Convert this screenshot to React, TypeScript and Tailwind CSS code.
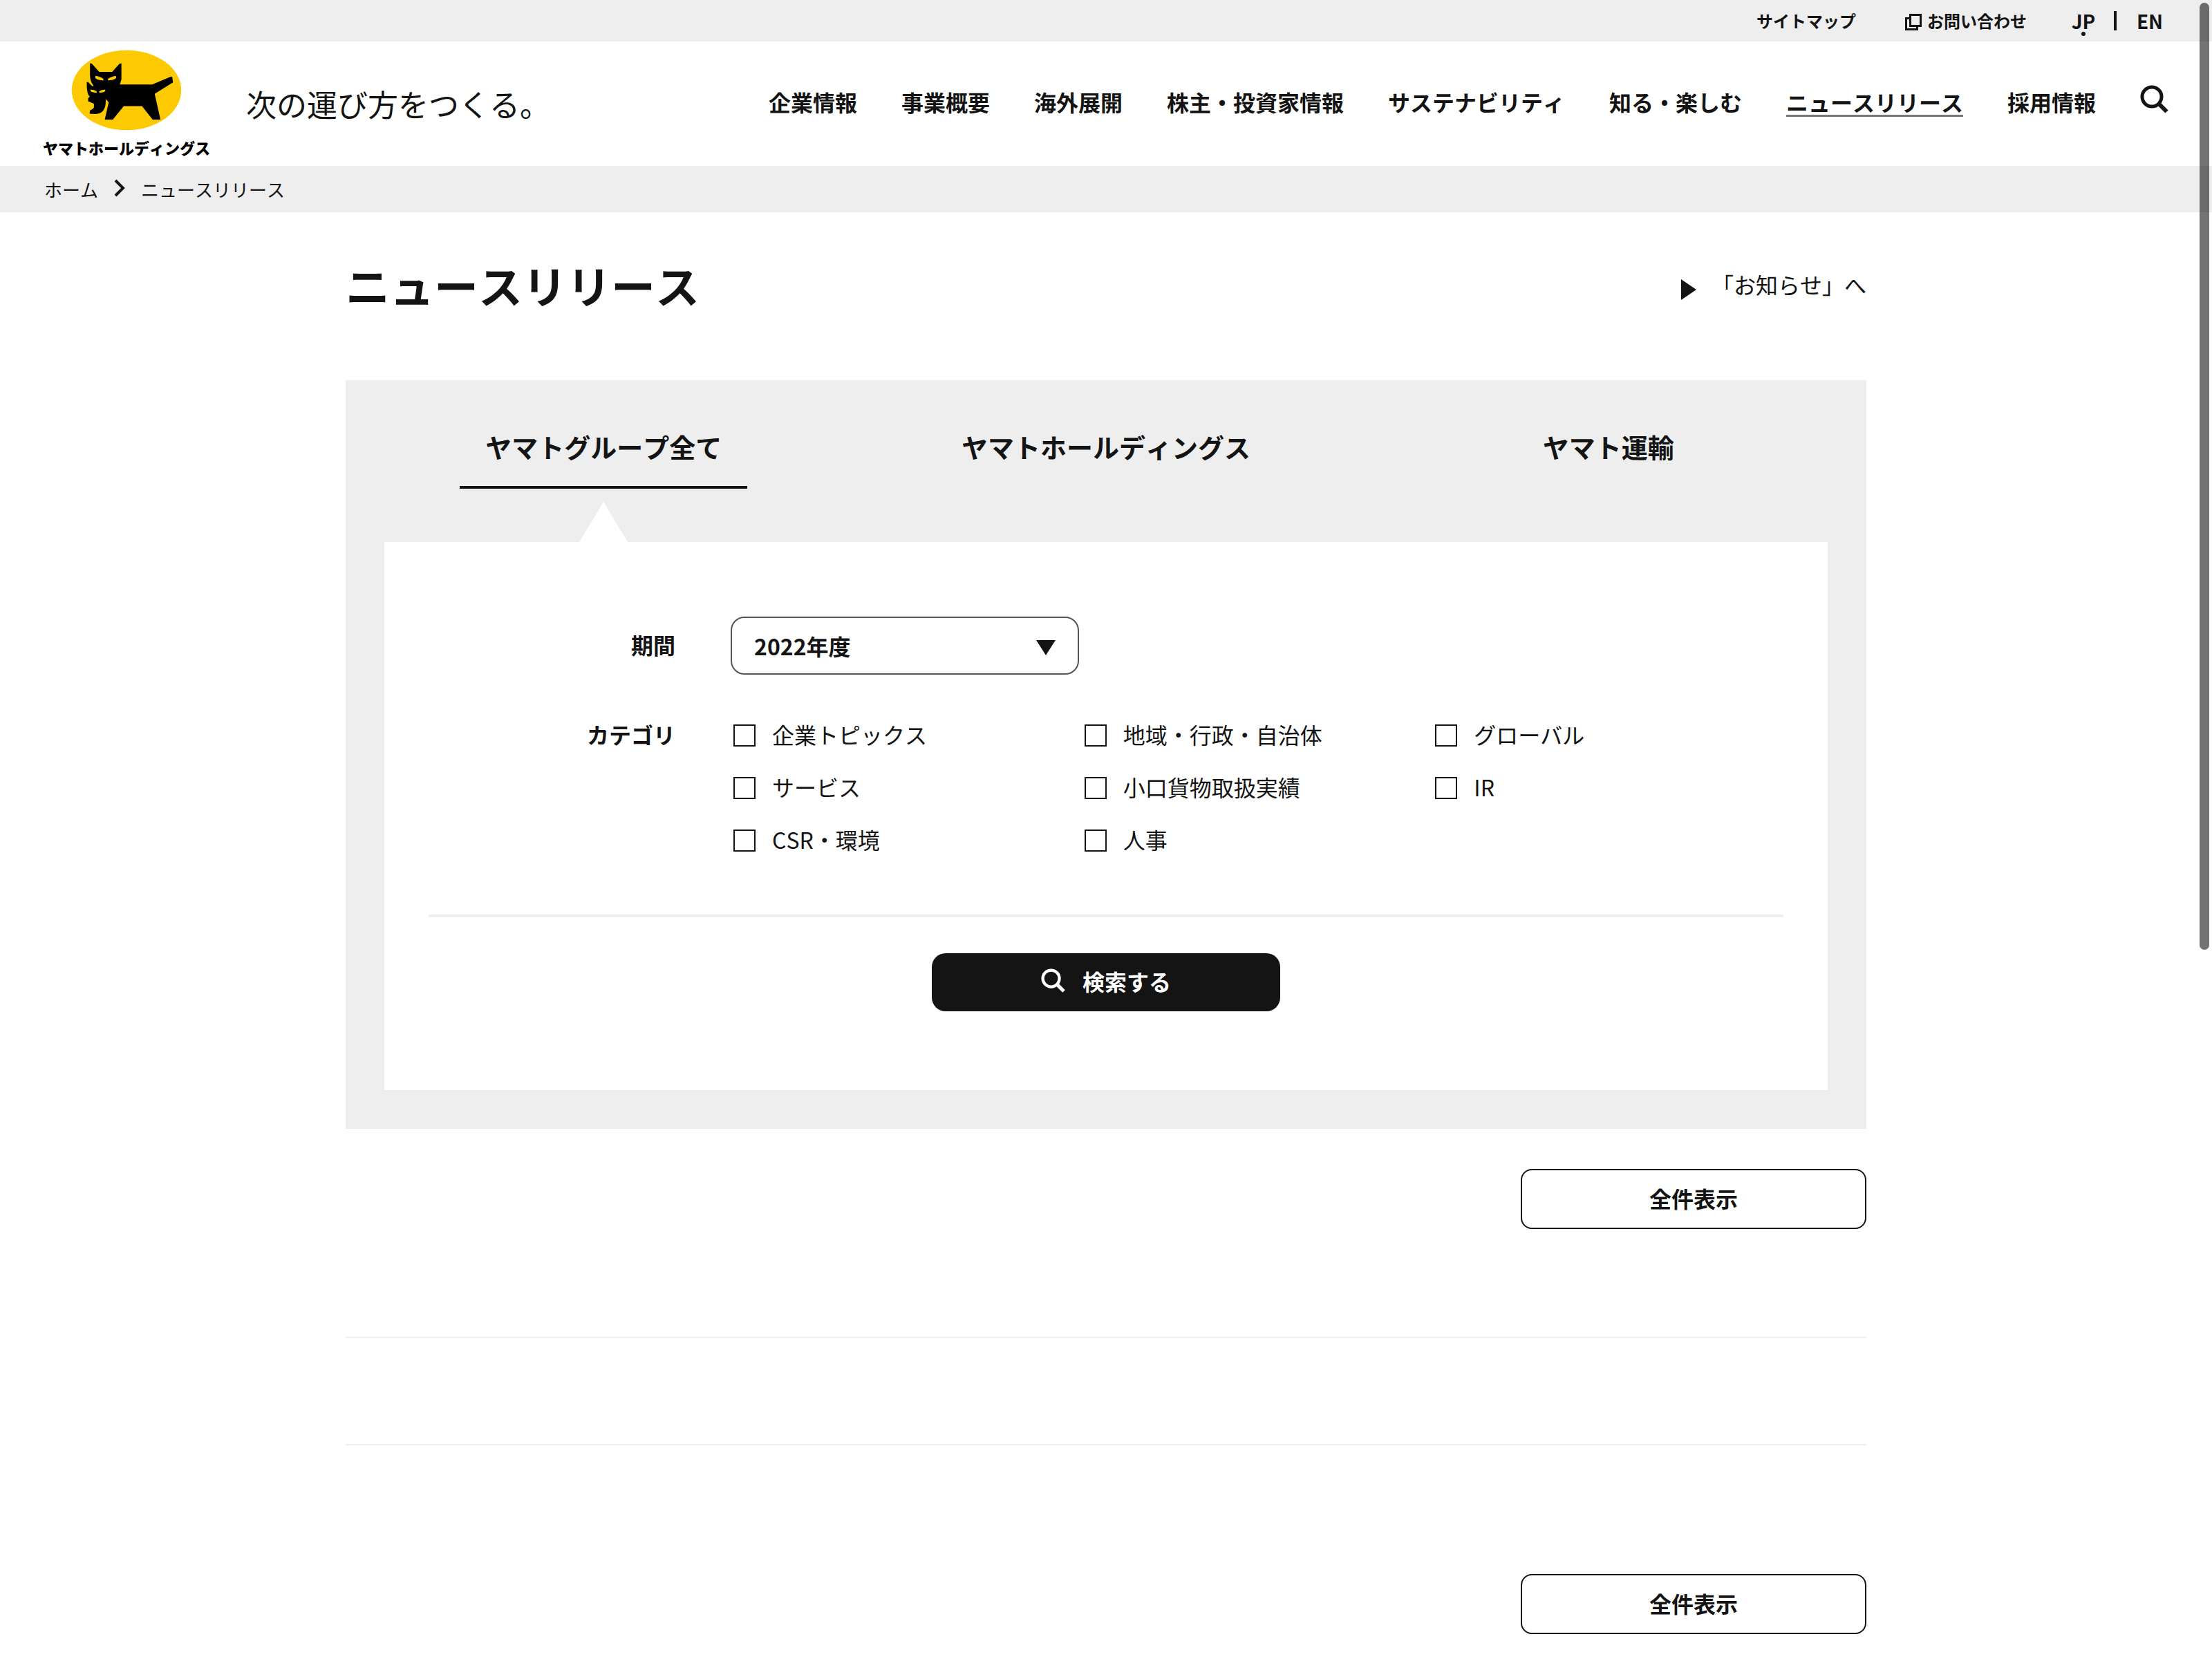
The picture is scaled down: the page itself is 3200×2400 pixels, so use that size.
import { useState } from 'react';

const navItems = [
  '企業情報',
  '事業概要',
  '海外展開',
  '株主・投資家情報',
  'サステナビリティ',
  '知る・楽しむ',
  'ニュースリリース',
  '採用情報',
];

const tabs = ['ヤマトグループ全て', 'ヤマトホールディングス', 'ヤマト運輸'];

const categories = [
  '企業トピックス',
  '地域・行政・自治体',
  'グローバル',
  'サービス',
  '小口貨物取扱実績',
  'IR',
  'CSR・環境',
  '人事',
];

const SearchIcon = ({ className }: { className: string }) => (
  <svg viewBox="0 0 42 42" fill="none" stroke="currentColor" className={className} aria-hidden="true">
    <circle cx="17" cy="17" r="14" strokeWidth="5" />
    <path d="M27 27 L38.5 38.5" strokeWidth="6" />
  </svg>
);

const Logo = () => (
  <a href="/" className="flex flex-col items-center">
    <svg viewBox="160 37 478 350" className="h-[117px] w-[160px]" aria-hidden="true">
      <ellipse cx="399" cy="212" rx="237" ry="173" fill="#fdc900" />
      <path
        d="M241 95 L249 97 L281 133 L337 133 L369 97 L377 96 L377 166 L370 187 L510 187 L592 153 L597 155 L600 178 L521 228 L546 339 L512 339 L466 281 L387 281 L340 339 L305 339 L322 264 L309 250 C312 290 297 315 264 315 L240 314 L240 300 C248 297 255 292 258 287 L258 270 L233 260 L233 247 L240 240 C229 228 227 210 227 177 L233 177 L250 194 L257 194 C246 180 241 163 241 147 Z"
        fill="#000"
      />
      <path d="M264 151 C278 151 290 156 299 163 L299 170 C284 170 270 166 264 160 Z" fill="#fdc900" />
      <path d="M354 151 C341 151 328 156 319 163 L319 170 C334 170 348 166 354 160 Z" fill="#fdc900" />
      <path d="M243 210 C254 208 263 212 270 217 L270 223 C258 223 247 220 243 216 Z" fill="#fdc900" />
      <path d="M307 210 C297 208 288 212 281 217 L281 223 C292 223 303 220 307 216 Z" fill="#fdc900" />
    </svg>
    <span className="mt-2 text-[22px] leading-8 font-black text-black">ヤマトホールディングス</span>
  </a>
);

const ShowAllButton = () => (
  <div className="flex justify-end">
    <button type="button" className="h-[87px] w-[500px] rounded-2xl border-2 border-[#141414] bg-white pb-1 text-[32px] leading-12 font-bold">
      全件表示
    </button>
  </div>
);

const App = () => {
  const [activeTab, setActiveTab] = useState(0);
  const [year, setYear] = useState('2022');

  return (
    <div lang="ja" className="relative bg-white pb-9 font-['Noto_Sans_CJK_JP',sans-serif] text-[#141414] [font-kerning:none]">
      <div className="flex h-[60px] items-center justify-end bg-[#eee] pr-[68px] text-2xl font-bold">
        <a href="/sitemap" className="mr-[71px]">サイトマップ</a>
        <a href="/contact" className="mr-16 flex items-center gap-2">
          <svg viewBox="0 0 24 24" fill="none" stroke="currentColor" strokeWidth="3" className="mt-1 size-6" aria-hidden="true">
            <path d="M7.5 1.5 H22.5 V17.5 H7.5 Z" />
            <path d="M7 6.5 H1.5 V22.5 H17.5 V18" />
          </svg>
          お問い合わせ
        </a>
        <div className="flex items-center gap-[26px] text-center text-[28px] leading-10">
          <a href="/" className="relative w-9">
            JP
            <span className="absolute -bottom-0.5 left-1/2 size-[6px] -translate-x-1/2 rounded-full bg-[#141414]" />
          </a>
          <span className="h-7 w-1 bg-[#141414]" />
          <a href="/en" className="w-11">EN</a>
        </div>
      </div>

      <header className="flex h-[180px] items-center px-[62px]">
        <Logo />
        <p className="ml-[52px] text-[44px] leading-none">次の運び方をつくる。</p>
        <nav className="mb-1 ml-auto flex gap-16 text-[32px] leading-[38px] font-bold">
          {navItems.map((item) => (
            <a
              key={item}
              href="#"
              className={item === 'ニュースリリース' ? 'border-b-3 border-[#777]' : 'border-b-3 border-transparent'}
            >
              {item}
            </a>
          ))}
        </nav>
        <button type="button" aria-label="検索" className="mb-3 ml-16">
          <SearchIcon className="size-[42px]" />
        </button>
      </header>

      <div className="flex h-[67px] items-center gap-[22px] bg-[#eee] px-16 text-[26px]">
        <a href="/">ホーム</a>
        <svg viewBox="0 0 18 28" fill="none" stroke="currentColor" strokeWidth="4" className="mb-1 h-7 w-[18px]" aria-hidden="true">
          <path d="M3 3 L14 14 L3 25" />
        </svg>
        <span>ニュースリリース</span>
      </div>

      <main className="mx-auto max-w-[2200px]">
        <div className="flex items-center justify-between pt-14 pb-[91px]">
          <h1 className="text-[64px] leading-24 font-bold">ニュースリリース</h1>
          <a href="/info" className="flex items-center gap-[22px] text-[32px] leading-12">
            <svg viewBox="0 0 22 30" className="mt-4 h-[30px] w-[22px]" aria-hidden="true">
              <path d="M0 0 L22 15 L0 30 Z" fill="currentColor" />
            </svg>
            「お知らせ」へ
          </a>
        </div>

        <section className="bg-[#eee] px-14 pb-14">
          <div role="tablist" className="-mx-[46px] grid grid-cols-3 pt-[68px]">
            {tabs.map((tab, i) => (
              <div key={tab} className="relative flex justify-center pb-[77px]">
                <button
                  type="button"
                  role="tab"
                  aria-selected={activeTab === i}
                  onClick={() => setActiveTab(i)}
                  className={
                    activeTab === i
                      ? 'border-b-4 border-[#141414] px-[37px] pb-[29px] text-[38px] leading-14 font-bold'
                      : 'border-b-4 border-transparent px-[37px] pb-[29px] text-[38px] leading-14 font-bold'
                  }
                >
                  {tab}
                </button>
                {activeTab === i && (
                  <svg viewBox="0 0 70 58" className="absolute bottom-0 left-1/2 h-[58px] w-[70px] -translate-x-1/2" aria-hidden="true">
                    <path d="M35 0 L70 58 H0 Z" fill="#fff" />
                  </svg>
                )}
              </div>
            ))}
          </div>

          <form className="bg-white px-16 pt-[108px] pb-[114px] text-[32px] leading-12" onSubmit={(e) => e.preventDefault()}>
            <div className="flex items-center gap-20">
              <label htmlFor="year" className="w-[357px] pb-1 text-right font-bold">期間</label>
              <div className="relative">
                <select
                  id="year"
                  value={year}
                  onChange={(e) => setYear(e.target.value)}
                  className="block h-[84px] w-[504px] appearance-none rounded-[20px] border-2 border-[#555] bg-white pl-8 font-bold"
                >
                  <option value="2022">2022年度</option>
                </select>
                <svg viewBox="0 0 28 22" className="pointer-events-none absolute top-[34px] right-[34px] h-[22px] w-7" aria-hidden="true">
                  <path d="M0 0 H28 L14 22 Z" fill="currentColor" />
                </svg>
              </div>
            </div>

            <fieldset className="mt-[62px] flex gap-20">
              <legend className="float-left w-[357px] text-right font-bold">カテゴリ</legend>
              <div className="-mr-1 grid flex-1 grid-cols-3 gap-y-6 pl-1">
                {categories.map((category) => (
                  <label key={category} className="flex items-center gap-6">
                    <input type="checkbox" className="size-8 appearance-none border-2 border-[#141414] bg-white checked:bg-[#141414]" />
                    <span className="pb-1">{category}</span>
                  </label>
                ))}
              </div>
            </fieldset>

            <div className="mt-[81px] border-t-4 border-[#eee] pt-[52px]">
              <button
                type="submit"
                className="mx-auto flex h-[84px] w-[504px] items-center justify-center gap-6 rounded-[20px] bg-[#141414] pb-1 font-bold text-white"
              >
                <SearchIcon className="size-9" />
                検索する
              </button>
            </div>
          </form>
        </section>

        <div className="pt-[58px]">
          <ShowAllButton />
          <div className="mt-[156px] mb-[186px] h-[157px] border-y-2 border-[#eee]" />
          <ShowAllButton />
        </div>
      </main>

      {/* scroll position indicator */}
      <div className="absolute top-1 right-1 h-[1370px] w-[14px] rounded-full bg-black/55" />
    </div>
  );
};

export default App;
